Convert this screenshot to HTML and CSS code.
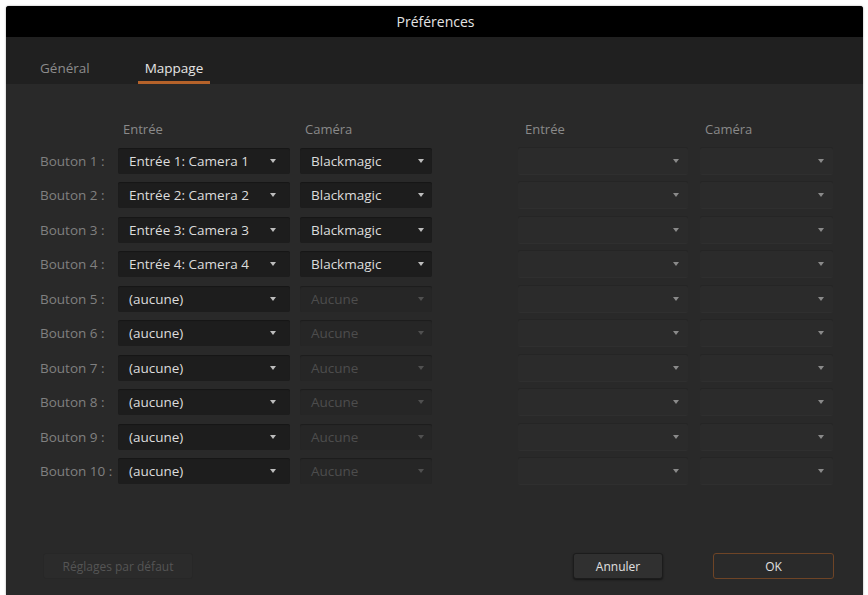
FILE: index.html
```html
<!DOCTYPE html>
<html lang="fr">
<head>
  <meta charset="UTF-8">
  <title>Préférences</title>
  <link rel="stylesheet" href="styles.css">
</head>
<body>
  <div class="window">
    <div class="titlebar">Préférences</div>

    <nav class="tabs">
      <span class="tab">Général</span>
      <span class="tab active">Mappage</span>
    </nav>

    <section class="mapping">
      <div class="group left">
        <span></span>
        <span class="col-head">Entrée</span>
        <span class="col-head">Caméra</span>

        <span class="label">Bouton 1 :</span>
        <div class="select first"><span>Entrée 1: Camera 1</span><i class="arrow"></i></div>
        <div class="select"><span>Blackmagic</span><i class="arrow"></i></div>

        <span class="label">Bouton 2 :</span>
        <div class="select first"><span>Entrée 2: Camera 2</span><i class="arrow"></i></div>
        <div class="select"><span>Blackmagic</span><i class="arrow"></i></div>

        <span class="label">Bouton 3 :</span>
        <div class="select first"><span>Entrée 3: Camera 3</span><i class="arrow"></i></div>
        <div class="select"><span>Blackmagic</span><i class="arrow"></i></div>

        <span class="label">Bouton 4 :</span>
        <div class="select first"><span>Entrée 4: Camera 4</span><i class="arrow"></i></div>
        <div class="select"><span>Blackmagic</span><i class="arrow"></i></div>

        <span class="label">Bouton 5 :</span>
        <div class="select first"><span>(aucune)</span><i class="arrow"></i></div>
        <div class="select disabled"><span>Aucune</span><i class="arrow"></i></div>

        <span class="label">Bouton 6 :</span>
        <div class="select first"><span>(aucune)</span><i class="arrow"></i></div>
        <div class="select disabled"><span>Aucune</span><i class="arrow"></i></div>

        <span class="label">Bouton 7 :</span>
        <div class="select first"><span>(aucune)</span><i class="arrow"></i></div>
        <div class="select disabled"><span>Aucune</span><i class="arrow"></i></div>

        <span class="label">Bouton 8 :</span>
        <div class="select first"><span>(aucune)</span><i class="arrow"></i></div>
        <div class="select disabled"><span>Aucune</span><i class="arrow"></i></div>

        <span class="label">Bouton 9 :</span>
        <div class="select first"><span>(aucune)</span><i class="arrow"></i></div>
        <div class="select disabled"><span>Aucune</span><i class="arrow"></i></div>

        <span class="label">Bouton 10 :</span>
        <div class="select first"><span>(aucune)</span><i class="arrow"></i></div>
        <div class="select disabled"><span>Aucune</span><i class="arrow"></i></div>
      </div>

      <div class="group right">
        <span class="col-head">Entrée</span>
        <span class="col-head">Caméra</span>

        <div class="select empty"><i class="arrow"></i></div>
        <div class="select empty"><i class="arrow"></i></div>
        <div class="select empty"><i class="arrow"></i></div>
        <div class="select empty"><i class="arrow"></i></div>
        <div class="select empty"><i class="arrow"></i></div>
        <div class="select empty"><i class="arrow"></i></div>
        <div class="select empty"><i class="arrow"></i></div>
        <div class="select empty"><i class="arrow"></i></div>
        <div class="select empty"><i class="arrow"></i></div>
        <div class="select empty"><i class="arrow"></i></div>
        <div class="select empty"><i class="arrow"></i></div>
        <div class="select empty"><i class="arrow"></i></div>
        <div class="select empty"><i class="arrow"></i></div>
        <div class="select empty"><i class="arrow"></i></div>
        <div class="select empty"><i class="arrow"></i></div>
        <div class="select empty"><i class="arrow"></i></div>
        <div class="select empty"><i class="arrow"></i></div>
        <div class="select empty"><i class="arrow"></i></div>
        <div class="select empty"><i class="arrow"></i></div>
        <div class="select empty"><i class="arrow"></i></div>
      </div>
    </section>

    <footer class="actions">
      <button class="btn reset" disabled>Réglages par défaut</button>
      <span class="spacer"></span>
      <button class="btn cancel">Annuler</button>
      <button class="btn ok">OK</button>
    </footer>
  </div>
</body>
</html>
```

FILE: styles.css
```css
html, body { margin: 0; background: #fff; }
body { font-family: 'Open Sans', 'Noto Sans', sans-serif; font-size: 13.5px; }

.window {
  margin: 6px 5px 0 6px;
  height: 589px;
  background: #292929;
  display: flex;
  flex-direction: column;
  border-radius: 3px 3px 0 0;
  overflow: hidden;
  box-shadow: 0 0 2px rgba(0,0,0,0.4);
}

.titlebar {
  height: 31px;
  background: #000;
  color: #e4e4e4;
  font-size: 14px;
  display: flex;
  align-items: center;
  justify-content: center;
  padding-left: 2px;
}

.tabs {
  height: 47px;
  background: #202020;
  display: flex;
  align-items: stretch;
  padding-left: 28px;
  gap: 42px;
}
.tab {
  color: #8c8c8c;
  display: flex;
  align-items: flex-end;
  line-height: 18px;
  padding: 0 6px 4px;
  border-bottom: 3px solid transparent;
}
.tab.active { color: #e6e6e6; border-bottom-color: #b5622a; padding: 0 7px 4px; }

.mapping {
  display: flex;
  padding: 36px 0 0 34px;
  gap: 86px;
}
.group {
  display: grid;
  grid-auto-rows: 26px;
  grid-template-rows: 19px;
  row-gap: 8.5px;
  column-gap: 10px;
  align-items: center;
}
.group.left { grid-template-columns: 68px 172px 132px; }
.group.right { grid-template-columns: 170px 133px; column-gap: 12px; }

.col-head { color: #8a8a8a; font-size: 13px; padding-left: 5px; align-self: start; }
.group.right .col-head:first-child { padding-left: 7px; }
.label { color: #808080; white-space: nowrap; }

.select {
  height: 26px;
  background: #1d1d1d;
  border-radius: 2px;
  display: flex;
  align-items: center;
  justify-content: space-between;
  padding: 0 8px 0 11px;
  color: #dcdcdc;
  white-space: nowrap;
  box-shadow: 0 1px 1px rgba(0,0,0,0.25) inset;
}
.select.first { padding-right: 14px; }
.select.disabled { background: #262626; color: #4d4d4d; }
.select.empty {
  background: #2b2b2b;
  justify-content: flex-end;
  padding-right: 9px;
  box-shadow: 0 -1px 0 #252525, 0 1px 0 #2f2f2f;
}

.arrow {
  width: 0;
  height: 0;
  border-left: 3px solid transparent;
  border-right: 3px solid transparent;
  border-top: 4px solid #bdbdbd;
}
.select.disabled .arrow { border-top-color: #505050; }
.select.empty .arrow { border-top-color: #8a8a8a; }

.actions {
  margin-top: auto;
  display: flex;
  align-items: center;
  padding: 0 29px 16px 37px;
  gap: 50px;
}
.spacer { flex: 1; }
.btn {
  height: 26px;
  font-family: inherit;
  font-size: 12px;
  border-radius: 3px;
  border: 1px solid #1c1c1c;
  background: #303030;
  color: #e0e0e0;
}
.btn.reset { width: 150px; background: #2b2b2b; color: #555; border-color: #272727; }
.btn.cancel { width: 90px; box-shadow: 0 1px 2px rgba(0,0,0,0.5); }
.btn.ok { width: 121px; border-color: #6e4426; background: #2a2a2a; }
```
